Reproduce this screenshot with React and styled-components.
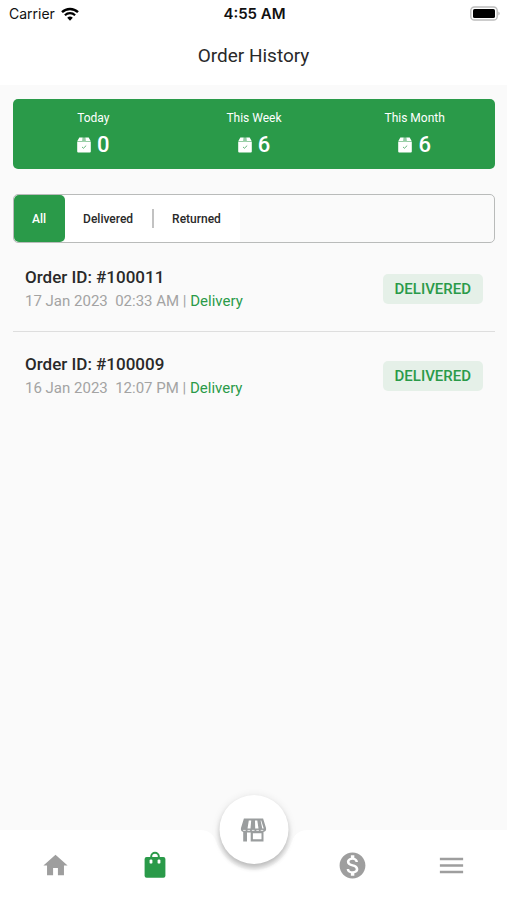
import React, { useState } from "react";
import styled, { createGlobalStyle } from "styled-components";
import { MdHome, MdMonetizationOn, MdMenu } from "react-icons/md";

const GREEN = "#2a9a49";

const GlobalStyle = createGlobalStyle`
  * { box-sizing: border-box; }
  body {
    margin: 0;
    background: #fafafa;
    color: #292929;
    font-family: Roboto, "Liberation Sans", sans-serif;
  }
  button { font: inherit; border: 0; padding: 0; background: none; cursor: pointer; }
`;

const Screen = styled.div`
  display: flex;
  flex-direction: column;
  min-height: 100vh;
`;

const StatusBar = styled.div`
  display: grid;
  grid-template-columns: 1fr auto 1fr;
  align-items: center;
  height: 27px;
  padding: 0 7px 0 9px;
  background: #fff;
  color: #111;
  font-family: Inter, sans-serif;
  font-size: 14px;
`;

const Carrier = styled.span`
  display: flex;
  align-items: center;
  gap: 6px;
`;

const Clock = styled.span`
  font-size: 15px;
  font-weight: 600;
`;

const Battery = styled.svg`
  justify-self: end;
`;

const Header = styled.header`
  height: 58px;
  background: #fff;
  text-align: center;
`;

const Title = styled.h1`
  margin: 0;
  font-size: 19px;
  font-weight: 400;
  line-height: 58px;
`;

const Content = styled.main`
  flex: 1;
  padding: 14px 12px 0 13px;
`;

const Stats = styled.dl`
  display: grid;
  grid-template-columns: repeat(3, 1fr);
  margin: 0;
  padding: 9px 0 11px;
  border-radius: 5px;
  background: ${GREEN};
  color: #fff;
  text-align: center;
`;

const StatLabel = styled.dt`
  font-size: 12px;
  line-height: 20px;
`;

const StatValue = styled.dd`
  display: flex;
  align-items: center;
  justify-content: center;
  gap: 6px;
  margin: 3px 0 0;
  font-size: 22px;
  font-weight: 500;
  line-height: 27px;
`;

const Filters = styled.div`
  display: flex;
  height: 49px;
  margin: 25px 0 2px;
  border: 1px solid #b9bbba;
  border-radius: 5px;
`;

const Filter = styled.button`
  display: flex;
  align-items: center;
  && { padding: 0 19px 0 18px; font-size: 12px; font-weight: 500; }
  border-radius: ${(p) => (p.$active ? "5px" : "0")};
  background: ${(p) => (p.$active ? GREEN : "#fff")};
  color: ${(p) => (p.$active ? "#fff" : "#292929")};
`;

const Separator = styled.span`
  display: flex;
  align-items: center;
  background: #fff;
  &::before { content: ""; width: 2px; height: 19px; background: #c2c2c2; }
`;

const Orders = styled.ul`
  margin: 0;
  padding: 0;
  list-style: none;
`;

const Order = styled.li`
  display: flex;
  align-items: center;
  justify-content: space-between;
  padding: 20px 12px 18px;
  border-bottom: ${(p) => (p.$last ? "0" : "1px solid #dedede")};
`;

const OrderId = styled.h2`
  margin: 0;
  font-size: 17px;
  font-weight: 500;
  line-height: 24px;
`;

const OrderMeta = styled.p`
  display: flex;
  margin: 0;
  color: #a3a3a3;
  font-size: 15px;
  line-height: 24px;
  white-space: pre;
`;

const OrderType = styled.span`
  color: ${GREEN};
`;

const Badge = styled.span`
  padding: 0 12px;
  border-radius: 5px;
  background: #e5f0e8;
  color: ${GREEN};
  font-size: 15px;
  font-weight: 500;
  line-height: 30px;
`;

const NavBar = styled.nav`
  position: sticky;
  bottom: 0;
  display: grid;
  grid-template-columns: repeat(5, 1fr);
  height: 70px;
  padding: 0 6px;
  background: #fff;
`;

const NavItem = styled.button`
  display: flex;
  align-items: center;
  justify-content: center;
  color: ${(p) => (p.$active ? GREEN : "#9e9e9e")};
`;

const StoreSlot = styled.div`
  position: relative;
`;

const Notch = styled.svg`
  position: absolute;
  top: 0;
  left: 50%;
  transform: translateX(-50%);
`;

const StoreButton = styled.button`
  position: absolute;
  top: -35px;
  left: 50%;
  transform: translateX(-50%);
  display: flex;
  align-items: center;
  justify-content: center;
  width: 69px;
  height: 69px;
  && { background: #fff; }
  border-radius: 50%;
  box-shadow: 0 4px 5px rgba(0, 0, 0, 0.2), 0 1px 8px rgba(0, 0, 0, 0.1);
`;

const WifiIcon = () => (
  <svg width="18" height="14" viewBox="0 0 18 14" aria-hidden="true">
    <path d="M1 5.2a11.6 11.6 0 0 1 16 0" fill="none" stroke="#000" strokeWidth="2.4" />
    <path d="M3.9 8.2a7.4 7.4 0 0 1 10.2 0" fill="none" stroke="#000" strokeWidth="2.2" />
    <path d="M9 13.8 6.2 10.8a4 4 0 0 1 5.6 0Z" fill="#000" />
  </svg>
);

const BatteryIcon = () => (
  <Battery width="30" height="15" viewBox="0 0 30 15" role="img" aria-label="Battery full">
    <rect x="0.8" y="1" width="26.4" height="13" rx="3.6" fill="#fff" stroke="#bcbcbc" strokeWidth="1.4" />
    <rect x="3" y="3" width="22" height="9" rx="1.6" fill="#000" />
    <path d="M28.3 5.4q1.4.6 1.4 2.1t-1.4 2.1Z" fill="#bcbcbc" />
  </Battery>
);

const PackageIcon = () => (
  <svg width="14" height="16" viewBox="0 0 14 16" aria-hidden="true">
    <path d="M2.3.4h3.4L5.4 4H.4Zm6 0h3.4L13.6 4h-5Z" fill="#fff" />
    <path d="M5.7.4h2.6l.3 3.8H5.4Z" fill="#fff" opacity=".5" />
    <path d="M.2 4.5h13.6v10a1 1 0 0 1-1 1H1.2a1 1 0 0 1-1-1Z" fill="#fff" />
    <path d="m5 10 1.5 1.2 2.7-2.6" fill="none" stroke={GREEN} strokeWidth="0.9" opacity=".8" />
  </svg>
);

const BagIcon = () => (
  <svg width="22" height="28" viewBox="0 0 22 28" aria-hidden="true">
    <path d="M7.2 8V5.6a3.8 3.8 0 0 1 7.6 0V8" fill="none" stroke={GREEN} strokeWidth="2" />
    <rect x="0.6" y="6" width="20.8" height="20.8" rx="2" fill={GREEN} />
    <rect x="5.6" y="8.4" width="2.8" height="4.2" rx="1.2" fill="#fff" />
    <rect x="13.6" y="8.4" width="2.8" height="4.2" rx="1.2" fill="#fff" />
  </svg>
);

const StoreIcon = () => (
  <svg width="26" height="24" viewBox="0 0 26 24" aria-hidden="true">
    <path
      fill="#9a9d9e"
      fillRule="evenodd"
      d="M3.4.5h19.2l3 9.8v1.8q-.6 1.7-2.6 1.9v9.5H10.2V14.5H6.5v9H2.7V14Q1 13.600.4 12v-1.700ZM8.300 2.500 7 10.500h3l.7-8Zm6.200 0 .2 8h3.300l-1.200-8Zm5.600 0 1.700 8h1.400l-2.500-8ZM12.400 15.200v6h8.600v-6Z"
    />
    <path d="M2.600 12.400h21" stroke="#fff" strokeWidth="1" strokeDasharray="2.600 1.800" opacity=".8" />
  </svg>
);

const NotchShape = () => (
  <Notch width="108" height="42" viewBox="0 0 108 42" aria-hidden="true">
    <path d="M0 0C9 0 13 4 16 11C22 29 37 40 54 40S86 29 92 11C95 4 99 0 108 0Z" fill="#fafafa" />
  </Notch>
);

const stats = [
  ["Today", 0],
  ["This Week", 6],
  ["This Month", 6],
];

const orders = [
  { id: "100011", date: "17 Jan 2023  02:33 AM" },
  { id: "100009", date: "16 Jan 2023  12:07 PM" },
];

export default function App() {
  const [filter, setFilter] = useState("All");
  const renderFilter = (name) => (
    <Filter
      type="button"
      $active={filter === name}
      aria-pressed={filter === name}
      onClick={() => setFilter(name)}
    >
      {name}
    </Filter>
  );

  return (
    <Screen>
      <GlobalStyle />
      <StatusBar>
        <Carrier>Carrier <WifiIcon /></Carrier>
        <Clock>4:55 AM</Clock>
        <BatteryIcon />
      </StatusBar>
      <Header>
        <Title>Order History</Title>
      </Header>
      <Content>
        <Stats>
          {stats.map(([label, count]) => (
            <div key={label}>
              <StatLabel>{label}</StatLabel>
              <StatValue><PackageIcon />{count}</StatValue>
            </div>
          ))}
        </Stats>
        <Filters>
          {renderFilter("All")}
          {renderFilter("Delivered")}
          <Separator />
          {renderFilter("Returned")}
        </Filters>
        <Orders>
          {orders.map((order, i) => (
            <Order key={order.id} $last={i === orders.length - 1}>
              <div>
                <OrderId>Order ID: #{order.id}</OrderId>
                <OrderMeta>
                  {order.date}{" | "}
                  <OrderType>Delivery</OrderType>
                </OrderMeta>
              </div>
              <Badge>DELIVERED</Badge>
            </Order>
          ))}
        </Orders>
      </Content>
      <NavBar>
        <NavItem type="button" aria-label="Home"><MdHome size={29} /></NavItem>
        <NavItem type="button" aria-label="Orders" $active><BagIcon /></NavItem>
        <StoreSlot>
          <NotchShape />
          <StoreButton type="button" aria-label="Store"><StoreIcon /></StoreButton>
        </StoreSlot>
        <NavItem type="button" aria-label="Earnings"><MdMonetizationOn size={31} /></NavItem>
        <NavItem type="button" aria-label="Menu"><MdMenu size={31} /></NavItem>
      </NavBar>
    </Screen>
  );
}
